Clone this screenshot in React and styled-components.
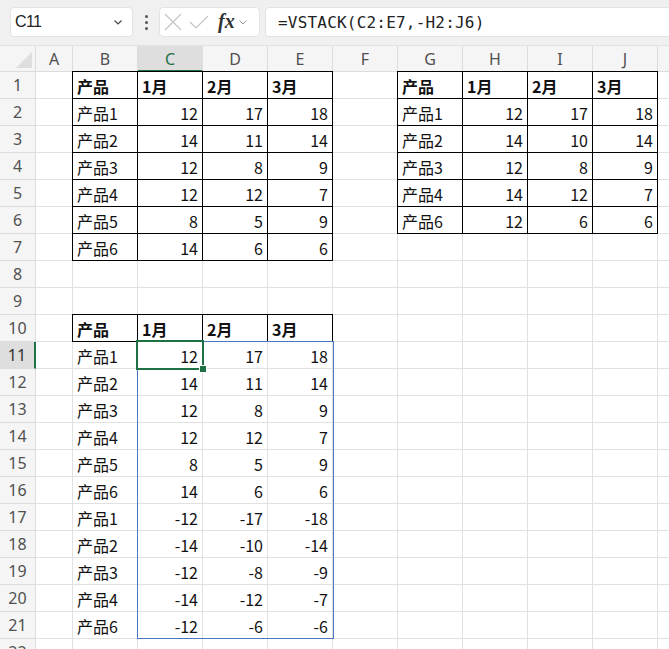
import React from 'react';
import styled, { createGlobalStyle } from 'styled-components';

const GlobalStyle = createGlobalStyle`
  html, body {
    margin: 0;
    padding: 0;
    background: #ffffff;
    overflow: hidden;
  }
  * { box-sizing: border-box; }
`;

const COLS = ['A', 'B', 'C', 'D', 'E', 'F', 'G', 'H', 'I', 'J', 'K'];
const ROW_COUNT = 22;

const header = ['产品', '1月', '2月', '3月'];
const table1 = [
  ['产品1', 12, 17, 18],
  ['产品2', 14, 11, 14],
  ['产品3', 12, 8, 9],
  ['产品4', 12, 12, 7],
  ['产品5', 8, 5, 9],
  ['产品6', 14, 6, 6],
];
const table2 = [
  ['产品1', 12, 17, 18],
  ['产品2', 14, 10, 14],
  ['产品3', 12, 8, 9],
  ['产品4', 14, 12, 7],
  ['产品6', 12, 6, 6],
];

// build sheet contents: key "C3" -> { v, bold, boxed }
function buildSheet() {
  const cells = {};
  const put = (col, row, v, opts = {}) => {
    cells[col + row] = { v, ...opts };
  };
  const place = (startCol, startRow, rows, boxed) => {
    const ci = COLS.indexOf(startCol);
    rows.forEach((r, ri) => {
      r.forEach((v, k) => put(COLS[ci + k], startRow + ri, v, { boxed }));
    });
  };
  header.forEach((h, k) => {
    put(COLS[1 + k], 1, h, { bold: true, boxed: true });
    put(COLS[6 + k], 1, h, { bold: true, boxed: true });
    put(COLS[1 + k], 10, h, { bold: true, boxed: true });
  });
  place('B', 2, table1, true);
  place('G', 2, table2, true);
  place('B', 11, table1, false);
  place('B', 17, table2.map(r => [r[0], -r[1], -r[2], -r[3]]), false);
  return cells;
}

const sheet = buildSheet();

export default function App() {
  return (
    <>
      <GlobalStyle />
      <Page>
        <FormulaBar>
          <NameBox>
            <NameText>C11</NameText>
            <Chevron width="12" height="12" viewBox="0 0 12 12">
              <path d="M2.5 4.5 L6 8 L9.5 4.5" fill="none" stroke="#444" strokeWidth="1.2" />
            </Chevron>
          </NameBox>
          <Dots>
            <span />
            <span />
            <span />
          </Dots>
          <FxBox>
            <svg width="22" height="22" viewBox="0 0 22 22">
              <path d="M3 3 L19 19 M19 3 L3 19" stroke="#c4c4c4" strokeWidth="1.2" fill="none" />
            </svg>
            <svg width="24" height="22" viewBox="0 0 24 22">
              <path d="M3 11 L9 17 L21 5" stroke="#c4c4c4" strokeWidth="1.2" fill="none" />
            </svg>
            <FxText>fx</FxText>
            <svg width="10" height="10" viewBox="0 0 10 10">
              <path d="M1.5 3.5 L5 7 L8.5 3.5" fill="none" stroke="#9a9a9a" strokeWidth="1" />
            </svg>
          </FxBox>
          <FormulaBox>=VSTACK(C2:E7,-H2:J6)</FormulaBox>
        </FormulaBar>

        <SheetArea>
          <Grid>
            <Corner />
            {COLS.map(c => (
              // K only peeks in at the right edge, its letter lies outside the view
              <ColHead key={c} $active={c === 'C'}>{c === 'K' ? '' : c}</ColHead>
            ))}
            {Array.from({ length: ROW_COUNT }, (_, i) => i + 1).map(r => (
              <React.Fragment key={r}>
                <RowHead $active={r === 11}>{r}</RowHead>
                {COLS.map(c => {
                  const cell = sheet[c + r];
                  const numeric = cell && typeof cell.v === 'number';
                  return (
                    <Cell
                      key={c + r}
                      $boxed={cell && cell.boxed}
                      $bold={cell && cell.bold}
                      $right={numeric}
                    >
                      {cell ? cell.v : ''}
                    </Cell>
                  );
                })}
              </React.Fragment>
            ))}
          </Grid>
          <SpillRange />
          <ActiveCell>
            <FillHandle />
          </ActiveCell>
        </SheetArea>
      </Page>
    </>
  );
}

const Page = styled.div`
  width: 669px;
  height: 649px;
  overflow: hidden;
  background: #ffffff;
  display: flex;
  flex-direction: column;
`;

const FormulaBar = styled.div`
  height: 46px;
  flex: none;
  background: #f0f0f0;
  display: flex;
  align-items: flex-start;
  padding: 7px 0 0 10px;
  border-bottom: 1px solid #e2e2e2;
`;

const NameBox = styled.div`
  width: 123px;
  height: 30px;
  background: #ffffff;
  border-radius: 4px;
  border: 1px solid #e3e3e3;
  display: flex;
  align-items: center;
  justify-content: space-between;
  padding: 0 8px 0 4px;
`;

const NameText = styled.span`
  font-family: "Liberation Sans", Arial, sans-serif;
  font-size: 16px;
  color: #222;
  letter-spacing: -0.6px;
`;

const Chevron = styled.svg`
  display: block;
`;

const Dots = styled.div`
  width: 26px;
  height: 30px;
  display: flex;
  flex-direction: column;
  align-items: center;
  justify-content: center;
  gap: 3px;

  span {
    width: 3px;
    height: 3px;
    border-radius: 50%;
    background: #555;
  }
`;

const FxBox = styled.div`
  width: 101px;
  height: 30px;
  background: #ffffff;
  border-radius: 4px;
  border: 1px solid #e3e3e3;
  display: flex;
  align-items: center;
  padding: 0 3px 0 2px;
  gap: 3px;

  svg {
    display: block;
    flex: none;
  }
`;

const FxText = styled.span`
  font-family: "Liberation Serif", "Times New Roman", serif;
  font-style: italic;
  font-weight: 700;
  font-size: 20px;
  color: #333;
  margin: 0 0 0 4px;
  line-height: 1;
  position: relative;
  top: -1px;
`;

const FormulaBox = styled.div`
  flex: 1;
  height: 30px;
  margin-left: 5px;
  background: #ffffff;
  border-radius: 4px 0 0 4px;
  border: 1px solid #e3e3e3;
  border-right: none;
  display: flex;
  align-items: center;
  padding-left: 12px;
  font-family: "DejaVu Sans Mono", "Liberation Mono", monospace;
  font-size: 16px;
  color: #222;
  letter-spacing: 0.2px;
`;

const SheetArea = styled.div`
  position: relative;
  flex: 1;
  overflow: hidden;
`;

const Grid = styled.div`
  display: grid;
  grid-template-columns: 36px 37px repeat(9, 65px) 65px;
  grid-template-rows: 26px;
  grid-auto-rows: 27px;
`;

const HeadBase = styled.div`
  background: #f5f5f5;
  border-right: 1px solid #dcdcdc;
  border-bottom: 1px solid #dcdcdc;
  display: flex;
  align-items: center;
  justify-content: center;
  font-family: "Noto Sans", "Open Sans", sans-serif;
  font-size: 16px;
  color: #505050;
`;

const Corner = styled(HeadBase)`
  position: relative;

  &::after {
    content: '';
    position: absolute;
    right: 3px;
    bottom: 3px;
    width: 0;
    height: 0;
    border-left: 16px solid transparent;
    border-bottom: 16px solid #dedede;
  }
`;

const ColHead = styled(HeadBase)`
  background: ${p => (p.$active ? '#dedede' : '#f5f5f5')};
  color: ${p => (p.$active ? '#1e7145' : '#505050')};
  border-bottom: ${p => (p.$active ? '2px solid #1e7145' : '1px solid #dcdcdc')};
  padding-top: ${p => (p.$active ? '1px' : '0')};
`;

const RowHead = styled(HeadBase)`
  background: ${p => (p.$active ? '#dedede' : '#f5f5f5')};
  border-right: ${p => (p.$active ? '2px solid #1e7145' : '1px solid #dcdcdc')};
  color: ${p => (p.$active ? '#333' : '#505050')};
`;

const Cell = styled.div`
  position: relative;
  background: #ffffff;
  border-right: 1px solid #e1e1e1;
  border-bottom: 1px solid #e1e1e1;
  display: flex;
  align-items: center;
  justify-content: ${p => (p.$right ? 'flex-end' : 'flex-start')};
  padding: 1px 4px 0 4px;
  font-family: "Noto Sans CJK SC", "Noto Sans", sans-serif;
  font-size: 16px;
  font-weight: ${p => (p.$bold ? 700 : 400)};
  color: #111;
  white-space: nowrap;

  ${p =>
    p.$boxed &&
    `
    &::after {
      content: '';
      position: absolute;
      top: -1px;
      left: -1px;
      right: -1px;
      bottom: -1px;
      border: 1px solid #000;
      pointer-events: none;
    }
  `}
`;

const SpillRange = styled.div`
  position: absolute;
  left: 137px;
  top: 295px;
  width: 197px;
  height: 298px;
  border: 1px solid #4a78bf;
  pointer-events: none;
`;

const ActiveCell = styled.div`
  position: absolute;
  left: 136px;
  top: 294px;
  width: 68px;
  height: 30px;
  border: 2px solid #1e7145;
  pointer-events: none;
`;

const FillHandle = styled.div`
  position: absolute;
  right: -5px;
  bottom: -5px;
  width: 8px;
  height: 8px;
  background: #1e7145;
  border: 1px solid #ffffff;
`;
